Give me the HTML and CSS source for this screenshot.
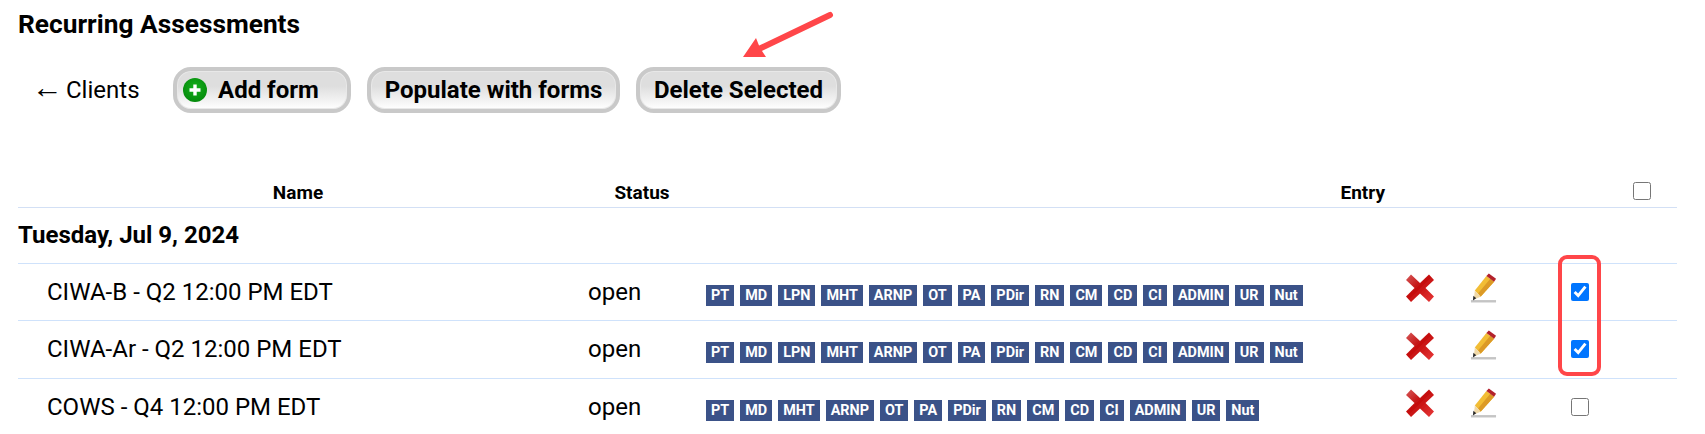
FILE: index.html
```html
<!DOCTYPE html>
<html lang="en">
<head>
    <meta charset="UTF-8">
    <meta name="viewport" content="width=device-width, initial-scale=1.0">
    <title>Recurring Assessments</title>
    <link rel="stylesheet" href="styles.css">
</head>
<body>

    <!-- shared icons -->
    <svg class="icon-defs" width="0" height="0">
        <defs>
            <linearGradient id="x-fill" x1="0" y1="0" x2="1" y2="1">
                <stop offset="0" stop-color="#d65a5a"/>
                <stop offset="0.45" stop-color="#c40d0d"/>
                <stop offset="1" stop-color="#e83a3a"/>
            </linearGradient>
            <radialGradient id="plus-fill" cx="0.5" cy="0.4" r="0.6">
                <stop offset="0" stop-color="#14b01c"/>
                <stop offset="1" stop-color="#058a0c"/>
            </radialGradient>
            <filter id="soft" x="-10%" y="-10%" width="120%" height="120%">
                <feGaussianBlur stdDeviation="0.6"/>
            </filter>
            <symbol id="icon-x" viewBox="0 0 30 30">
                <path filter="url(#soft)" fill="url(#x-fill)" d="M6 1.500 L15 10 L24 1.500 L29 7 L20.500 15 L29 23.500 L24 29 L15 20.500 L6 29 L1 23.500 L9.500 15 L1 7 Z"/>
            </symbol>
            <symbol id="icon-pencil" viewBox="0 0 28 32">
                <g filter="url(#soft)">
                    <path fill="#c4c4c4" d="M1 28 H27 V30.500 H1 Z"/>
                    <path fill="#f2bd35" d="M5 18 L17 3 L25 9 L11 24.500 Z"/>
                    <path fill="#dc9a26" d="M8.500 21 L21 6 L25 9 L11 24.500 Z"/>
                    <path fill="#f0d9a8" d="M5 18 L11 24.500 L4 27.500 Z"/>
                    <path fill="#2c2c2c" d="M3.500 23.500 L6.500 26 L3 28.500 Z"/>
                    <path fill="#b3202c" d="M17 3 L19.500 0.500 L27 6 L25 9 Z"/>
                </g>
            </symbol>
        </defs>
    </svg>

    <h1 class="page-title">Recurring Assessments</h1>

    <div class="toolbar">
        <a class="back-link" href="#"><span class="back-arrow">←</span> Clients</a>
        <button class="btn btn-add" type="button">
            <svg class="plus-icon" width="24" height="24" viewBox="0 0 24 24">
                <circle cx="12" cy="12" r="12" fill="url(#plus-fill)"/>
                <path d="M12 6.500 V17.500 M6.500 12 H17.500" stroke="#fff" stroke-width="3.400"/>
            </svg>
            Add form
        </button>
        <button class="btn btn-populate" type="button">Populate with forms</button>
        <button class="btn btn-delete" type="button">Delete Selected</button>
    </div>

    <table class="forms-table">
        <colgroup>
            <col class="col-name">
            <col class="col-status">
            <col class="col-tags">
            <col class="col-delete">
            <col class="col-edit">
            <col class="col-check">
            <col class="col-last">
        </colgroup>
        <thead>
            <tr>
                <th>Name</th>
                <th>Status</th>
                <th class="th-entry">Entry</th>
                <th></th>
                <th></th>
                <th></th>
                <th class="th-check"><input type="checkbox"></th>
            </tr>
        </thead>
        <tbody>
            <tr class="date-row">
                <td colspan="7">Tuesday, Jul 9, 2024</td>
            </tr>
            <tr>
                <td class="form-name">CIWA-B - Q2 12:00 PM EDT</td>
                <td class="form-status">open</td>
                <td class="form-tags">
                    <span class="tag">PT</span><span class="tag">MD</span><span class="tag">LPN</span><span class="tag">MHT</span><span class="tag">ARNP</span><span class="tag">OT</span><span class="tag">PA</span><span class="tag">PDir</span><span class="tag">RN</span><span class="tag">CM</span><span class="tag">CD</span><span class="tag">CI</span><span class="tag">ADMIN</span><span class="tag">UR</span><span class="tag">Nut</span>
                </td>
                <td class="icon-cell"><svg class="icon-x" width="30" height="30"><use href="#icon-x"/></svg></td>
                <td class="icon-cell"><svg class="icon-pencil" width="27" height="31"><use href="#icon-pencil"/></svg></td>
                <td class="check-cell"><input type="checkbox" checked></td>
                <td></td>
            </tr>
            <tr class="tall-row">
                <td class="form-name">CIWA-Ar - Q2 12:00 PM EDT</td>
                <td class="form-status">open</td>
                <td class="form-tags">
                    <span class="tag">PT</span><span class="tag">MD</span><span class="tag">LPN</span><span class="tag">MHT</span><span class="tag">ARNP</span><span class="tag">OT</span><span class="tag">PA</span><span class="tag">PDir</span><span class="tag">RN</span><span class="tag">CM</span><span class="tag">CD</span><span class="tag">CI</span><span class="tag">ADMIN</span><span class="tag">UR</span><span class="tag">Nut</span>
                </td>
                <td class="icon-cell"><svg class="icon-x" width="30" height="30"><use href="#icon-x"/></svg></td>
                <td class="icon-cell"><svg class="icon-pencil" width="27" height="31"><use href="#icon-pencil"/></svg></td>
                <td class="check-cell"><input type="checkbox" checked></td>
                <td></td>
            </tr>
            <tr class="last-row">
                <td class="form-name">COWS - Q4 12:00 PM EDT</td>
                <td class="form-status">open</td>
                <td class="form-tags">
                    <span class="tag">PT</span><span class="tag">MD</span><span class="tag">MHT</span><span class="tag">ARNP</span><span class="tag">OT</span><span class="tag">PA</span><span class="tag">PDir</span><span class="tag">RN</span><span class="tag">CM</span><span class="tag">CD</span><span class="tag">CI</span><span class="tag">ADMIN</span><span class="tag">UR</span><span class="tag">Nut</span>
                </td>
                <td class="icon-cell"><svg class="icon-x" width="30" height="30"><use href="#icon-x"/></svg></td>
                <td class="icon-cell"><svg class="icon-pencil" width="27" height="31"><use href="#icon-pencil"/></svg></td>
                <td class="check-cell"><input type="checkbox"></td>
                <td></td>
            </tr>
        </tbody>
    </table>

    <!-- annotations drawn over the screenshot -->
    <svg class="note-arrow" width="100" height="60" viewBox="0 0 100 60">
        <path d="M87 5 L18 38" stroke="#ff4649" stroke-width="6" stroke-linecap="round" fill="none"/>
        <path d="M0 47 L13 28 L17 38 L23 47 Z" fill="#ff4649"/>
    </svg>
    <div class="note-box"></div>

</body>
</html>
```

FILE: styles.css
```css
html, body {
    height: 434px;
    overflow: hidden;
}
body {
    font-family: Roboto, Arial, sans-serif;
    color: #000;
    background: #fff;
    margin: 0;
    padding: 0 28px 0 18px;
    position: relative;
}
.icon-defs {
    position: absolute;
}
.page-title {
    font-size: 26.300px;
    font-weight: 700;
    line-height: 26px;
    margin: 0;
    padding-top: 11px;
}
.toolbar {
    display: flex;
    align-items: center;
    margin-top: 30px;
    height: 46px;
}
.back-link {
    display: flex;
    align-items: baseline;
    gap: 3px;
    color: #000;
    text-decoration: none;
    font-size: 24px;
    margin-left: 14px;
    width: 141px;
    white-space: nowrap;
}
.back-arrow {
    font-family: "Liberation Sans", sans-serif;
    font-size: 31px;
    line-height: 24px;
}
.btn {
    display: flex;
    align-items: center;
    height: 46px;
    font-family: inherit;
    font-size: 24px;
    font-weight: 700;
    color: #000;
    border: 4px solid #c9c9c9;
    border-radius: 18px;
    background: linear-gradient(to bottom, #dedede 40%, #fff 100%);
    box-shadow: inset 0 0 0 1px #e8e8e8;
    padding: 0;
    justify-content: center;
    box-sizing: border-box;
}
.btn-add {
    width: 178px;
    justify-content: flex-start;
    padding-left: 6px;
    margin-right: 16px;
}
.plus-icon {
    margin-right: 11px;
}
.btn-populate {
    width: 253px;
    margin-right: 16px;
}
.btn-delete {
    width: 205px;
}
.forms-table {
    width: 1659px;
    table-layout: fixed;
    border-collapse: collapse;
    margin-top: 59px;
}
.col-name { width: 560px; }
.col-status { width: 128px; }
.col-tags { width: 689px; }
.col-delete { width: 65px; }
.col-edit { width: 80px; }
.col-check { width: 80px; }
.col-last { width: 57px; }
.forms-table th {
    box-sizing: border-box;
    font-size: 19px;
    font-weight: 700;
    height: 35px;
    padding: 6px 0 0;
    text-align: center;
    border-bottom: 1px solid #d3e0f5;
}
.forms-table .th-entry {
    text-align: right;
    padding-right: 10px;
}
.forms-table .th-check {
    text-align: left;
    padding-left: 13px;
    padding-top: 3px;
}
.forms-table input {
    width: 18px;
    height: 18px;
    margin: 0;
    display: block;
}
.forms-table td {
    box-sizing: border-box;
    height: 57px;
    padding: 0;
    border-bottom: 1px solid #cfe2fb;
}
.forms-table .date-row td {
    font-size: 24px;
    font-weight: 700;
    height: 56px;
}
.forms-table .tall-row td {
    height: 58px;
}
.forms-table .last-row td {
    border-bottom: none;
}
.form-name {
    font-size: 24px;
    padding-left: 29px !important;
}
.form-status {
    font-size: 24px;
    padding-left: 10px !important;
}
.form-tags {
    white-space: nowrap;
    padding-top: 7px !important;
}
.tag {
    display: inline-block;
    background: #3b5288;
    color: #fff;
    font-size: 14.400px;
    font-weight: 700;
    line-height: 21px;
    padding: 0 5px;
    margin-right: 6px;
}
.icon-cell svg {
    display: block;
    margin-left: 10px;
    margin-bottom: 7px;
}
.check-cell input {
    margin-left: 31px !important;
}
.note-arrow {
    position: absolute;
    left: 743px;
    top: 10px;
}
.note-box {
    position: absolute;
    left: 1558px;
    top: 255px;
    width: 43px;
    height: 121px;
    box-sizing: border-box;
    border: 4px solid #ff4649;
    border-radius: 9px;
}
```
